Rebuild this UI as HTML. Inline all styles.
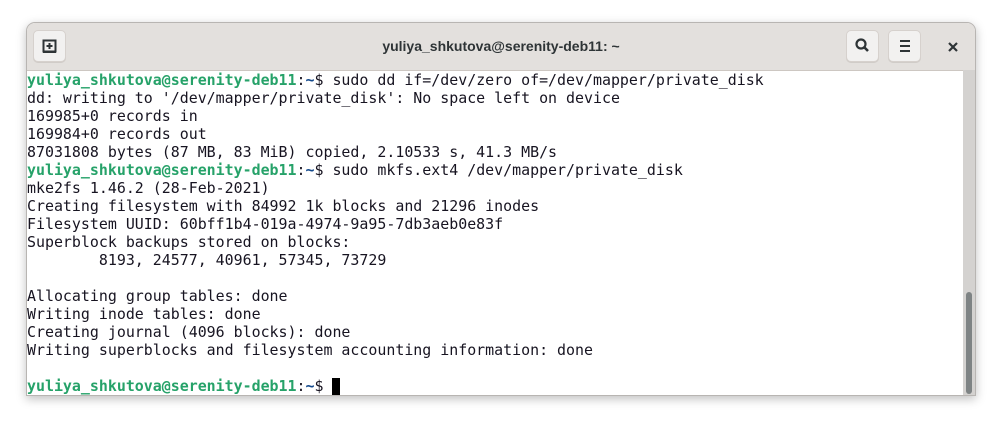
<!DOCTYPE html>
<html><head><style>
body{margin:0;width:1002px;height:425px;background:#fff;position:relative;overflow:hidden;font-family:"Liberation Sans",sans-serif}
.win{position:absolute;left:26px;top:22px;width:950px;height:374px;border:1px solid #b8b5b2;border-radius:9px 9px 0 0;box-shadow:0 3px 10px rgba(0,0,0,.25);background:#fff;overflow:hidden;box-sizing:border-box}
.hdr{position:absolute;left:0;top:0;right:0;height:47px;background:#e3e0dd;border-bottom:1px solid #cdc7c2}
.btn{position:absolute;top:7px;width:33px;height:32px;border-radius:5px;background:#f2f1f0;border:1px solid #d6d1cd;box-sizing:border-box;box-shadow:0 1px 0 #d0ccc8}
.title{position:absolute;left:0;right:0;top:15px;text-align:center;font-weight:bold;font-size:14px;color:#2e3436}
.term{position:absolute;left:0;top:48px;font-family:"DejaVu Sans Mono","Liberation Mono",monospace;font-size:14.93px;line-height:18px;color:#171421;white-space:pre}
.g{color:#26a269;font-weight:bold}.b{color:#12488b;font-weight:bold}
.trough{position:absolute;right:0;top:47px;width:12px;bottom:0;background:#d4d2d0}
.thumb{position:absolute;right:3px;top:222px;width:6px;height:102px;border-radius:3px;background:#7e8384}
.cur{display:inline-block;width:8px;height:17px;background:#000;vertical-align:-4px}
</style></head><body>
<div class="win">
<div class="hdr">
<div class="btn" style="left:6px"><svg width="31" height="30"><rect x="9.5" y="9.5" width="12" height="11" fill="none" stroke="#2e3436" stroke-width="2"/><path d="M15.5 12v6M12.5 15h6" stroke="#2e3436" stroke-width="2"/><path d="M9 21h13" stroke="#2e3436" stroke-width="2"/></svg></div>
<div class="title">yuliya_shkutova@serenity-deb11: ~</div>
<div class="btn" style="left:819px"><svg width="31" height="30"><circle cx="14" cy="13" r="4.5" fill="none" stroke="#2e3436" stroke-width="2.2"/><path d="M17.5 16.5l3.5 3.5" stroke="#2e3436" stroke-width="2.6"/></svg></div>
<div class="btn" style="left:861px"><svg width="31" height="30"><path d="M11 10h10M11 15h10M11 20h10" stroke="#2e3436" stroke-width="2"/></svg></div>
<svg style="position:absolute;left:920px;top:18px" width="12" height="12"><path d="M2 2l8 8M10 2l-8 8" stroke="#2e3436" stroke-width="2.2"/></svg>
</div>
<div class="term"><span class="g">yuliya_shkutova@serenity-deb11</span>:<span class="b">~</span>$ sudo dd if=/dev/zero of=/dev/mapper/private_disk
dd: writing to '/dev/mapper/private_disk': No space left on device
169985+0 records in
169984+0 records out
87031808 bytes (87 MB, 83 MiB) copied, 2.10533 s, 41.3 MB/s
<span class="g">yuliya_shkutova@serenity-deb11</span>:<span class="b">~</span>$ sudo mkfs.ext4 /dev/mapper/private_disk
mke2fs 1.46.2 (28-Feb-2021)
Creating filesystem with 84992 1k blocks and 21296 inodes
Filesystem UUID: 60bff1b4-019a-4974-9a95-7db3aeb0e83f
Superblock backups stored on blocks:
        8193, 24577, 40961, 57345, 73729

Allocating group tables: done
Writing inode tables: done
Creating journal (4096 blocks): done
Writing superblocks and filesystem accounting information: done

<span class="g">yuliya_shkutova@serenity-deb11</span>:<span class="b">~</span>$ <span class="cur"></span></div>
<div class="trough"><div class="thumb"></div></div>
</div>
</body></html>
